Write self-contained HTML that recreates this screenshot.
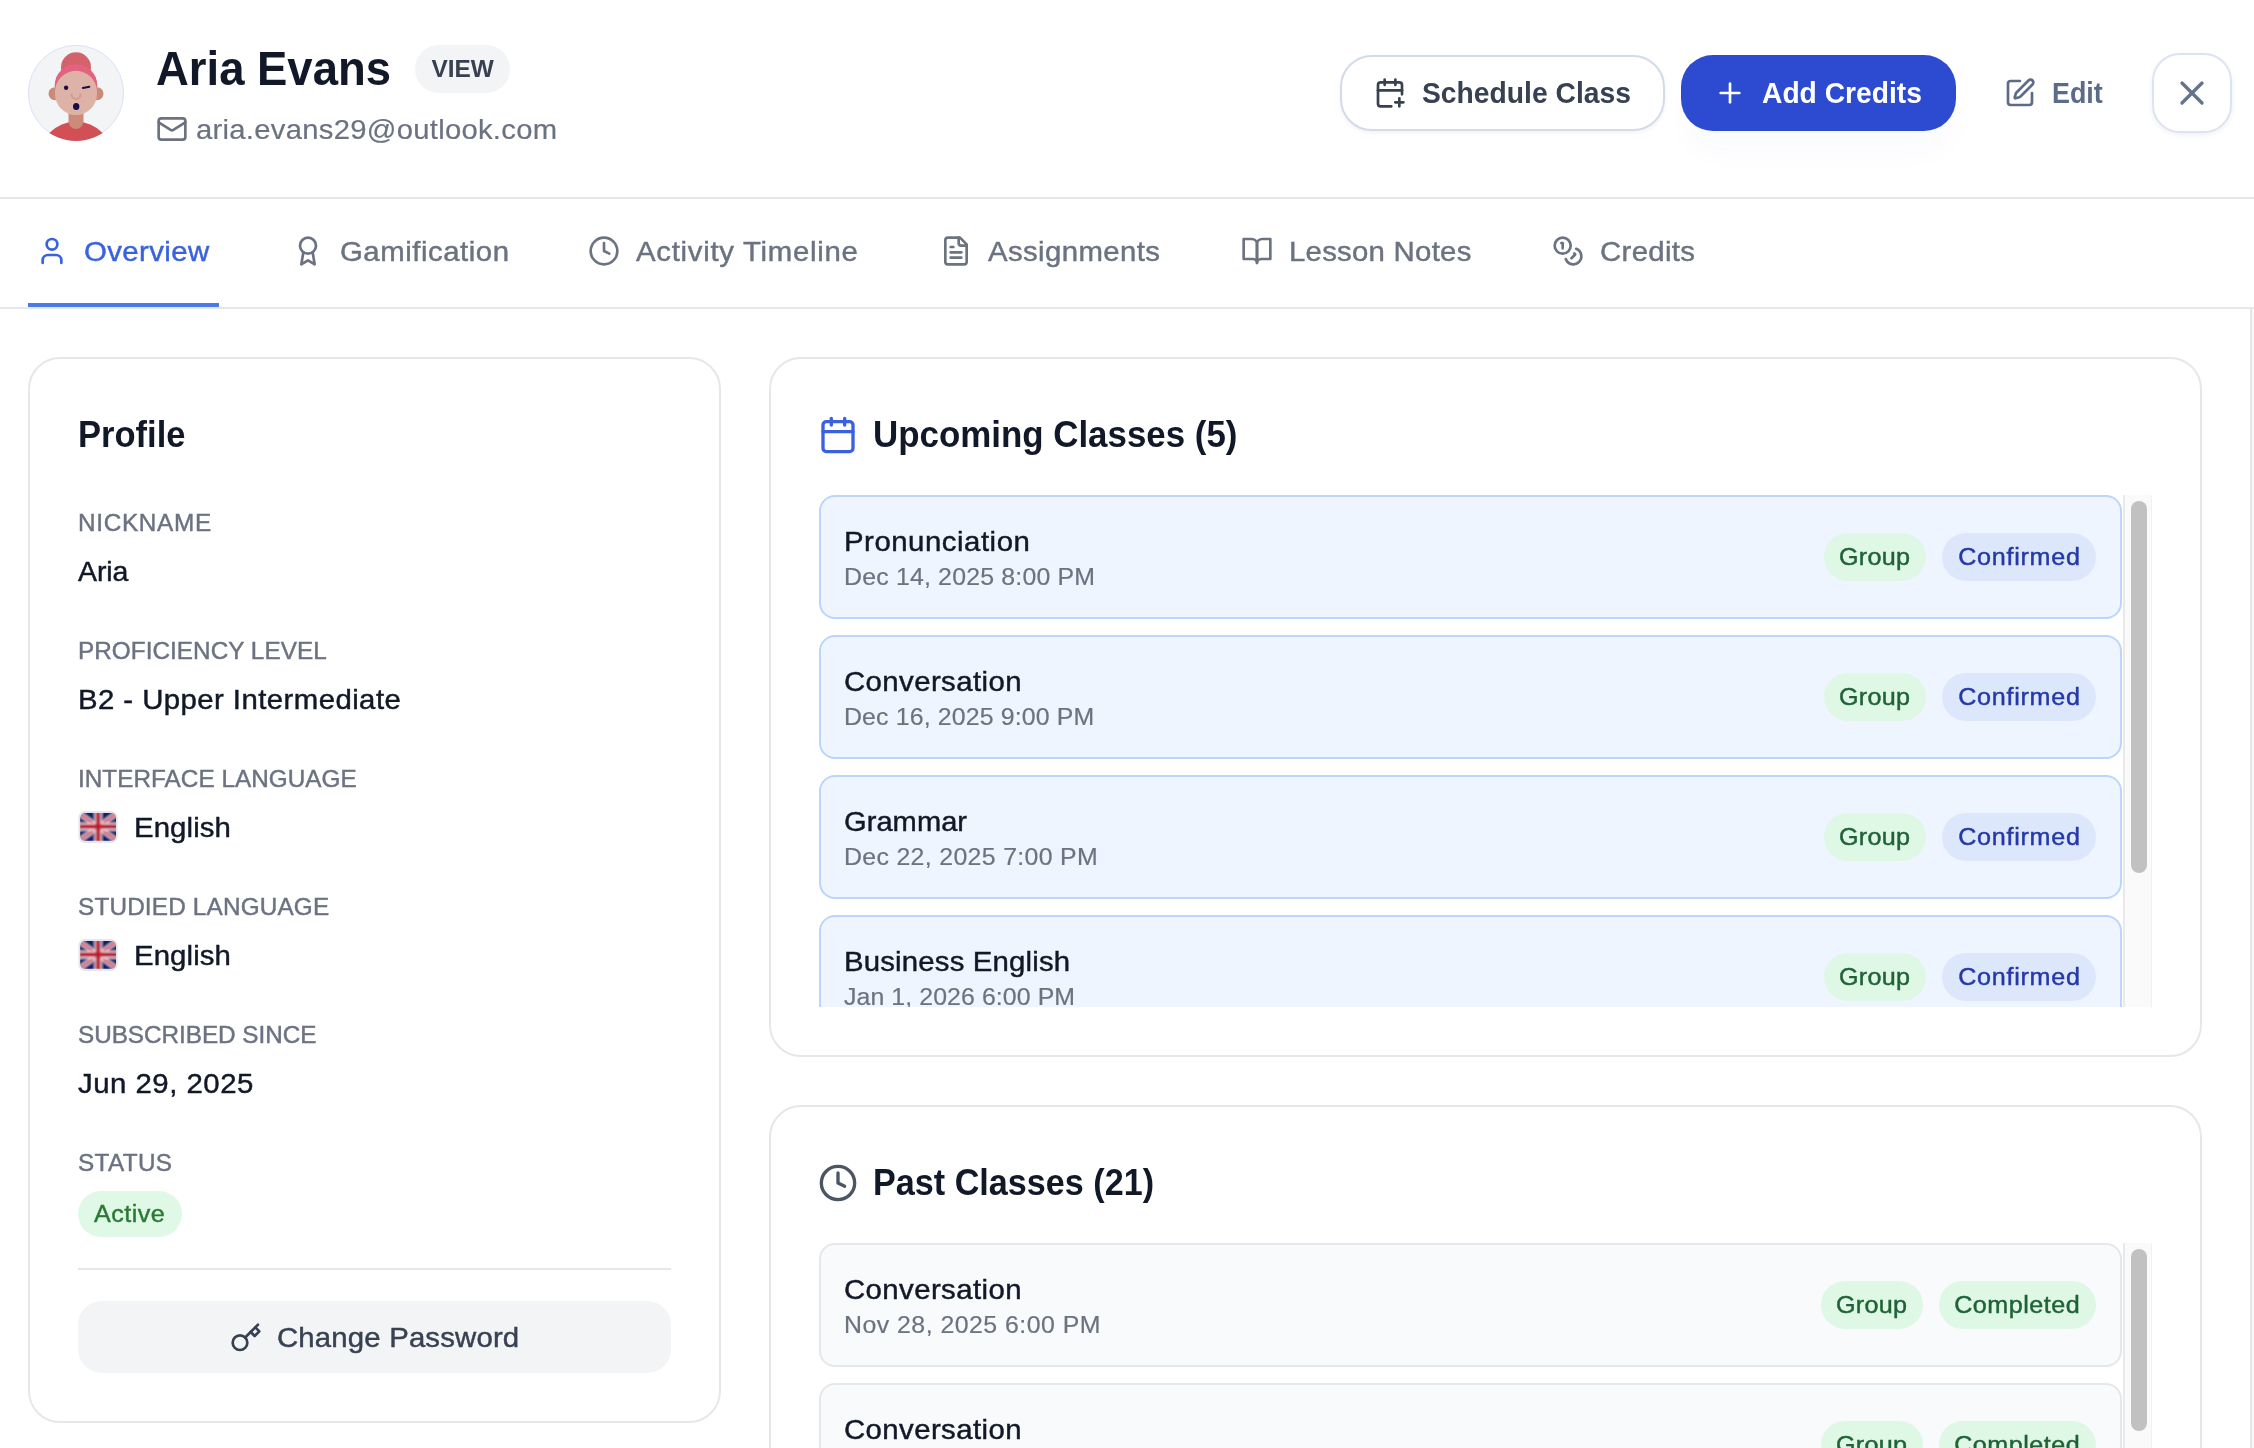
<!DOCTYPE html>
<html lang="en">
<head>
<meta charset="utf-8">
<title>Aria Evans – Student Profile</title>
<style>
*{box-sizing:border-box;margin:0;padding:0}
html,body{width:2254px;height:1448px;overflow:hidden;background:#fff}
body{font-family:"Liberation Sans",Arial,sans-serif;color:#111827;position:relative}
svg{display:block;flex:none}
button{font:inherit;border:0;background:none;cursor:pointer;text-align:left}
a{text-decoration:none}
ul{list-style:none}
.x{display:inline-block;white-space:nowrap;transform-origin:0 50%}
.m{-webkit-text-stroke:.45px currentColor}
.r{-webkit-text-stroke:.2px currentColor}
.ic{fill:none;stroke:currentColor;stroke-width:2;stroke-linecap:round;stroke-linejoin:round}
.header,.tabs,.card{will-change:transform}

/* ---------- header ---------- */
.header{position:absolute;left:0;top:0;width:2254px;height:199px;border-bottom:2px solid #e5e7eb;background:#fff}
.avatar{position:absolute;left:28px;top:45px;width:96px;height:96px}
.name{position:absolute;left:156px;top:40px;height:56px;line-height:56px;font-size:49px;font-weight:700;color:#111827;white-space:nowrap}
.view{position:absolute;left:415px;top:45px;width:95px;height:48px;border-radius:24px;background:#f3f4f6;color:#374151;font-size:24px;font-weight:700;line-height:48px;text-align:center;white-space:nowrap}
.view .x{transform-origin:50% 50%}
.email{position:absolute;left:156px;top:109px;height:40px;display:flex;align-items:center;color:#6b7280;font-size:28.5px;line-height:40px;white-space:nowrap}
.email svg{width:32px;height:32px;margin-right:8px}

.btn{position:absolute;display:flex;align-items:center;white-space:nowrap;font-size:28.8px;font-weight:700;line-height:40px}
.btn svg{width:32px;height:32px;margin-right:16px}
.btn-schedule{left:1340px;top:55px;width:325px;height:76px;border:2px solid #d3dbe9;border-radius:32px;background:#fff;color:#374151;padding-left:32px;box-shadow:0 2px 4px rgba(30,41,90,.06)}
.btn-add{left:1681px;top:55px;width:275px;height:76px;border-radius:32px;background:#2c4bd0;color:#fff;padding-left:33px;box-shadow:0 26px 34px -8px rgba(44,75,208,.028)}
.btn-edit{left:2004px;top:55px;height:76px;color:#5b6b88}
.btn-close{left:2152px;top:53px;width:80px;height:80px;border:2px solid #dde3f0;border-radius:28px;background:#fff;color:#64748b;justify-content:center;box-shadow:0 2px 5px rgba(30,41,90,.07)}
.btn-close svg{width:40px;height:40px;margin:0}

/* ---------- tabs ---------- */
.tabs{position:absolute;left:0;top:199px;width:2254px;height:110px;border-bottom:2px solid #e5e7eb;background:#fff}
.tab{position:absolute;top:0;height:108px;display:flex;align-items:center;padding:0 8px 4px 8px;color:#6b7280;font-size:28.5px;line-height:40px;white-space:nowrap}
.tab svg{width:32px;height:32px;margin-right:16px}
.tab.active{color:#3a62de;border-bottom:4px solid #4a7be8;padding-bottom:0}

/* ---------- content ---------- */
.main{position:absolute;left:0;top:309px;width:2252px;height:1139px;border-right:2px solid #e5e7eb;background:#fff}
.edge{position:absolute;left:2252px;top:309px;width:2px;height:1139px;background:#f7f7f8}
.card{position:absolute;border:2px solid #e5e7eb;border-radius:32px;background:#fff;padding:48px}
.profile{left:28px;top:357px;width:693px;height:1066px}
.upcoming{left:769px;top:357px;width:1433px;height:700px}
.past{left:769px;top:1105px;width:1433px;height:700px}
.card h3{font-size:36.5px;line-height:56px;height:56px;font-weight:700;color:#111827;white-space:nowrap;display:flex;align-items:center}
.card h3 svg{width:40px;height:40px;margin-left:-1px;margin-right:15px}

/* profile fields */
.fields{margin-top:48px}
.field{height:80px;margin-bottom:48px}
.field dt{height:24px;line-height:24px;font-size:24.3px;color:#6b7280;text-transform:uppercase;white-space:nowrap}
.field dd{height:40px;line-height:40px;margin-top:16px;font-size:28.5px;color:#111827;white-space:nowrap;display:flex;align-items:center}
.flag{width:40px;height:32px;margin-right:16px}
.pill{display:flex;align-items:center;justify-content:center;height:48px;line-height:48px;border-radius:24px;font-size:24.4px;white-space:nowrap}
.pill .x{transform-origin:50% 50%}
.pill.green{background:#def8e5;color:#1f6236}
.pill.blue{background:#dde7fb;color:#2438a8}
.pill.active{height:46px;line-height:46px;width:104px;margin-top:6px;color:#2a7a36;background:#dff9e6}
.divider{position:absolute;left:48px;top:909px;width:593px;height:2px;background:#e5e7eb}
.btn-pw{position:absolute;left:48px;top:942px;width:593px;height:72px;border-radius:24px;background:#f3f4f6;color:#374151;display:flex;align-items:center;padding-left:152px;font-size:28.5px;line-height:40px;white-space:nowrap}
.btn-pw svg{width:32px;height:32px;margin-right:15px;position:relative;top:.5px}

/* class lists */
.list{position:absolute;left:48px;top:136px;width:1333px;height:512px;overflow:hidden}
.item{position:relative;width:1303px;height:124px;margin-bottom:16px;border:2px solid #bcd5fb;border-radius:16px;background:#eff5fe}
.past .item{border-color:#e5e7eb;background:#f9fafb}
.item .t{position:absolute;left:23px;top:24px;height:40px;line-height:40px;font-size:28.5px;color:#111827;white-space:nowrap}
.item .d{position:absolute;left:23px;top:64px;height:32px;line-height:32px;font-size:24.4px;color:#6b7280;white-space:nowrap}
.item .pill{position:absolute;top:36px}
.sb{position:absolute;right:0;top:0;width:29px;height:512px;background:#fafafa;border-left:2px solid #e9e9e9;border-right:1px solid #f1f1f1}
.sb i{position:absolute;left:6px;width:16px;border-radius:8px;background:#c1c1c1}
</style>
</head>
<body>
<header class="header">
  <svg class="avatar" viewBox="0 0 96 96" aria-label="Avatar of Aria Evans">
    <defs><clipPath id="avc"><circle cx="48" cy="48" r="48"/></clipPath></defs>
    <circle cx="48" cy="48" r="47.600" fill="#f3f4f6" stroke="#d9d6fb" stroke-width=".800"/>
    <g clip-path="url(#avc)">
      <circle cx="48" cy="113.600" r="37" fill="#d24f55"/>
      <path d="M40.500 62h15v14.500a7.500 7.500 0 0 1-15 0z" fill="#cc8a78"/>
      <circle cx="27" cy="48.700" r="6.500" fill="#cc8a78"/>
      <circle cx="69" cy="48.700" r="6.500" fill="#cc8a78"/>
      <circle cx="48" cy="22.300" r="15" fill="#d3626a"/>
      <circle cx="48" cy="40.500" r="21.300" fill="#e2637f"/>
      <rect x="27" y="25.800" width="42" height="44.200" rx="21" ry="21" fill="#deb3a7"/>
      <circle cx="38.100" cy="42.700" r="2.200" fill="#1b0b47"/>
      <path d="M54.900 42.900l6.400-1.100" stroke="#1b0b47" stroke-width="2" stroke-linecap="round" fill="none"/>
      <path d="M43.600 49.400a4.500 4.500 0 0 0 9 0" stroke="#d39a8d" stroke-width="2" stroke-linecap="round" fill="none"/>
      <ellipse cx="48.200" cy="61.500" rx="3.200" ry="3.600" fill="#1b0b47"/>
    </g>
  </svg>
  <h1 class="name"><span class="x" style="transform:scaleX(0.9275)">Aria Evans</span></h1>
  <span class="view"><span class="x" style="transform:scaleX(1.0164)">VIEW</span></span>
  <div class="email">
    <svg class="ic" viewBox="0 0 24 24"><rect width="20" height="16" x="2" y="4" rx="2"/><path d="m22 7-8.970 5.700a1.940 1.940 0 0 1-2.060 0L2 7"/></svg>
    <span class="x r" style="letter-spacing:0.28px;transform:scaleX(1.025)">aria.evans29@outlook.com</span>
  </div>

  <button class="btn btn-schedule">
    <svg class="ic" viewBox="0 0 24 24"><path d="M8 2v4"/><path d="M16 2v4"/><path d="M21 13V6a2 2 0 0 0-2-2H5a2 2 0 0 0-2 2v14a2 2 0 0 0 2 2h8"/><path d="M3 10h18"/><path d="M16 19h6"/><path d="M19 16v6"/></svg>
    <span class="x" style="transform:scaleX(0.9815)">Schedule Class</span>
  </button>
  <button class="btn btn-add">
    <svg class="ic" viewBox="0 0 24 24"><path d="M5 12h14"/><path d="M12 5v14"/></svg>
    <span class="x" style="transform:scaleX(0.9801)">Add Credits</span>
  </button>
  <button class="btn btn-edit">
    <svg class="ic" viewBox="0 0 24 24"><path d="M12 3H5a2 2 0 0 0-2 2v14a2 2 0 0 0 2 2h14a2 2 0 0 0 2-2v-7"/><path d="M18.375 2.625a1 1 0 0 1 3 3l-9.013 9.014a2 2 0 0 1-.853.505l-2.873.840a.5.5 0 0 1-.620-.620l.840-2.873a2 2 0 0 1 .506-.852z"/></svg>
    <span class="x" style="transform:scaleX(0.934)">Edit</span>
  </button>
  <button class="btn btn-close" aria-label="Close">
    <svg class="ic" viewBox="0 0 24 24"><path d="M18 6 6 18"/><path d="m6 6 12 12"/></svg>
  </button>
</header>

<nav class="tabs">
  <a class="tab active" style="left:28px;width:191px">
    <svg class="ic" viewBox="0 0 24 24"><path d="M19 21v-2a4 4 0 0 0-4-4H9a4 4 0 0 0-4 4v2"/><circle cx="12" cy="7" r="4"/></svg>
    <span class="x m" style="letter-spacing:0.38px;transform:scaleX(1.03)">Overview</span>
  </a>
  <a class="tab" style="left:284px">
    <svg class="ic" viewBox="0 0 24 24"><circle cx="12" cy="8" r="6"/><path d="M15.477 12.890 17 22l-5-3-5 3 1.523-9.110"/></svg>
    <span class="x m" style="letter-spacing:0.52px;transform:scaleX(1.03)">Gamification</span>
  </a>
  <a class="tab" style="left:580px">
    <svg class="ic" viewBox="0 0 24 24"><circle cx="12" cy="12" r="10"/><path d="M12 6v6l4 2"/></svg>
    <span class="x m" style="letter-spacing:0.69px;transform:scaleX(1.03)">Activity Timeline</span>
  </a>
  <a class="tab" style="left:932px">
    <svg class="ic" viewBox="0 0 24 24"><path d="M15 2H6a2 2 0 0 0-2 2v16a2 2 0 0 0 2 2h12a2 2 0 0 0 2-2V7Z"/><path d="M14 2v4a2 2 0 0 0 2 2h4"/><path d="M10 9H8"/><path d="M16 13H8"/><path d="M16 17H8"/></svg>
    <span class="x m" style="letter-spacing:0.38px;transform:scaleX(1.03)">Assignments</span>
  </a>
  <a class="tab" style="left:1233px">
    <svg class="ic" viewBox="0 0 24 24"><path d="M2 3h6a4 4 0 0 1 4 4v14a3 3 0 0 0-3-3H2z"/><path d="M22 3h-6a4 4 0 0 0-4 4v14a3 3 0 0 1 3-3h7z"/></svg>
    <span class="x m" style="letter-spacing:0.25px;transform:scaleX(1.03)">Lesson Notes</span>
  </a>
  <a class="tab" style="left:1544px">
    <svg class="ic" viewBox="0 0 24 24"><circle cx="8" cy="8" r="6"/><path d="M18.090 10.370A6 6 0 1 1 10.340 18"/><path d="M7 6h1v4"/><path d="m16.710 13.880.700.710-2.820 2.820"/></svg>
    <span class="x m" style="letter-spacing:0.33px;transform:scaleX(1.03)">Credits</span>
  </a>
</nav>

<main class="main"></main>
<div class="edge"></div>

<section class="card profile">
  <h3><span class="x" style="transform:scaleX(0.9464)">Profile</span></h3>
  <dl class="fields">
    <div class="field"><dt><span class="x m" style="letter-spacing:0.7px">NICKNAME</span></dt><dd><span class="x m" style="letter-spacing:-0.1px">Aria</span></dd></div>
    <div class="field"><dt><span class="x m" style="letter-spacing:0.04px">PROFICIENCY LEVEL</span></dt><dd><span class="x m" style="letter-spacing:0.42px;transform:scaleX(1.03)">B2 - Upper Intermediate</span></dd></div>
    <div class="field"><dt><span class="x m" style="letter-spacing:0.03px">INTERFACE LANGUAGE</span></dt><dd><svg class="flag" viewBox="0 0 40 32" aria-label="English flag"><defs><clipPath id="fc1"><rect x="2.200" y="2.100" width="35.800" height="27.700" rx="4.500"/></clipPath><filter id="fb1" x="-10%" y="-10%" width="120%" height="120%"><feGaussianBlur stdDeviation=".800"/></filter></defs><rect x=".400" y=".100" width="39.300" height="31.800" rx="6.500" fill="#e3e7ee"/><g clip-path="url(#fc1)"><g filter="url(#fb1)"><rect x="-4" y="-4" width="48" height="40" fill="#0f1f6a"/><path d="M-2 0 42 32M42 0-2 32" stroke="#f8e9ed" stroke-width="4.800"/><path d="M-2 0 42 32M42 0-2 32" stroke="#cf3b56" stroke-width="2.400"/><path d="M20.100 -4v40M-4 15.700h48" stroke="#fbf0f3" stroke-width="7.400"/><path d="M20.100 -4v40M-4 15.700h48" stroke="#b81f33" stroke-width="4.800"/></g></g></svg><span class="x m" style="letter-spacing:0.1px;transform:scaleX(1.03)">English</span></dd></div>
    <div class="field"><dt><span class="x m" style="letter-spacing:0.18px">STUDIED LANGUAGE</span></dt><dd><svg class="flag" viewBox="0 0 40 32" aria-label="English flag"><defs><clipPath id="fc2"><rect x="2.200" y="2.100" width="35.800" height="27.700" rx="4.500"/></clipPath><filter id="fb2" x="-10%" y="-10%" width="120%" height="120%"><feGaussianBlur stdDeviation=".800"/></filter></defs><rect x=".400" y=".100" width="39.300" height="31.800" rx="6.500" fill="#e3e7ee"/><g clip-path="url(#fc2)"><g filter="url(#fb2)"><rect x="-4" y="-4" width="48" height="40" fill="#0f1f6a"/><path d="M-2 0 42 32M42 0-2 32" stroke="#f8e9ed" stroke-width="4.800"/><path d="M-2 0 42 32M42 0-2 32" stroke="#cf3b56" stroke-width="2.400"/><path d="M20.100 -4v40M-4 15.700h48" stroke="#fbf0f3" stroke-width="7.400"/><path d="M20.100 -4v40M-4 15.700h48" stroke="#b81f33" stroke-width="4.800"/></g></g></svg><span class="x m" style="letter-spacing:0.1px;transform:scaleX(1.03)">English</span></dd></div>
    <div class="field"><dt><span class="x m" style="letter-spacing:-0.04px">SUBSCRIBED SINCE</span></dt><dd><span class="x m" style="letter-spacing:0.49px;transform:scaleX(1.03)">Jun 29, 2025</span></dd></div>
    <div class="field"><dt><span class="x m" style="letter-spacing:0.36px">STATUS</span></dt><dd><span class="pill active"><span class="x m" style="letter-spacing:0.45px;transform:scaleX(1.03)">Active</span></span></dd></div>
  </dl>
  <div class="divider"></div>
  <button class="btn-pw">
    <svg class="ic" viewBox="0 0 24 24"><circle cx="7.500" cy="15.500" r="5.500"/><path d="m21 2-9.600 9.600"/><path d="m15.500 7.500 3 3L22 7l-3-3"/></svg>
    <span class="x m" style="letter-spacing:0.16px;transform:scaleX(1.03)">Change Password</span>
  </button>
</section>

<section class="card upcoming">
  <h3><svg class="ic" viewBox="0 0 24 24" style="color:#3a62de"><path d="M8 2v4"/><path d="M16 2v4"/><rect width="18" height="18" x="3" y="4" rx="2"/><path d="M3 10h18"/></svg><span class="x" style="transform:scaleX(0.9556)">Upcoming Classes (5)</span></h3>
  <div class="list">
    <ul>
      <li class="item">
        <div class="t"><span class="x m" style="letter-spacing:0.51px;transform:scaleX(1.03)">Pronunciation</span></div>
        <div class="d"><span class="x r" style="letter-spacing:0.18px;transform:scaleX(1.02)">Dec 14, 2025 8:00 PM</span></div>
        <span class="pill green" style="left:1003px;width:102px"><span class="x m" style="letter-spacing:0.3px;transform:scaleX(1.03)">Group</span></span>
        <span class="pill blue" style="left:1121px;width:154px"><span class="x m" style="letter-spacing:0.71px;transform:scaleX(1.03)">Confirmed</span></span>
      </li>
      <li class="item">
        <div class="t"><span class="x m" style="letter-spacing:0.4px;transform:scaleX(1.03)">Conversation</span></div>
        <div class="d"><span class="x r" style="letter-spacing:0.14px;transform:scaleX(1.02)">Dec 16, 2025 9:00 PM</span></div>
        <span class="pill green" style="left:1003px;width:102px"><span class="x m" style="letter-spacing:0.3px;transform:scaleX(1.03)">Group</span></span>
        <span class="pill blue" style="left:1121px;width:154px"><span class="x m" style="letter-spacing:0.71px;transform:scaleX(1.03)">Confirmed</span></span>
      </li>
      <li class="item">
        <div class="t"><span class="x m" style="letter-spacing:0.05px;transform:scaleX(1.02)">Grammar</span></div>
        <div class="d"><span class="x r" style="letter-spacing:0.32px;transform:scaleX(1.02)">Dec 22, 2025 7:00 PM</span></div>
        <span class="pill green" style="left:1003px;width:102px"><span class="x m" style="letter-spacing:0.3px;transform:scaleX(1.03)">Group</span></span>
        <span class="pill blue" style="left:1121px;width:154px"><span class="x m" style="letter-spacing:0.71px;transform:scaleX(1.03)">Confirmed</span></span>
      </li>
      <li class="item">
        <div class="t"><span class="x m" style="letter-spacing:0.17px;transform:scaleX(1.03)">Business English</span></div>
        <div class="d"><span class="x r" style="letter-spacing:0.08px;transform:scaleX(1.02)">Jan 1, 2026 6:00 PM</span></div>
        <span class="pill green" style="left:1003px;width:102px"><span class="x m" style="letter-spacing:0.3px;transform:scaleX(1.03)">Group</span></span>
        <span class="pill blue" style="left:1121px;width:154px"><span class="x m" style="letter-spacing:0.71px;transform:scaleX(1.03)">Confirmed</span></span>
      </li>
    </ul>
    <div class="sb"><i style="top:6px;height:372px"></i></div>
  </div>
</section>

<section class="card past">
  <h3><svg class="ic" viewBox="0 0 24 24" style="color:#4b5563"><circle cx="12" cy="12" r="10"/><path d="M12 6v6l4 2"/></svg><span class="x" style="transform:scaleX(0.936)">Past Classes (21)</span></h3>
  <div class="list">
    <ul>
      <li class="item">
        <div class="t"><span class="x m" style="letter-spacing:0.4px;transform:scaleX(1.03)">Conversation</span></div>
        <div class="d"><span class="x r" style="letter-spacing:0.46px;transform:scaleX(1.02)">Nov 28, 2025 6:00 PM</span></div>
        <span class="pill green" style="left:1000px;width:102px"><span class="x m" style="letter-spacing:0.3px;transform:scaleX(1.03)">Group</span></span>
        <span class="pill green" style="left:1118px;width:157px"><span class="x m" style="letter-spacing:0.49px;transform:scaleX(1.03)">Completed</span></span>
      </li>
      <li class="item">
        <div class="t"><span class="x m" style="letter-spacing:0.4px;transform:scaleX(1.03)">Conversation</span></div>
        <div class="d"><span class="x r" style="letter-spacing:0.46px;transform:scaleX(1.02)">Nov 26, 2025 6:00 PM</span></div>
        <span class="pill green" style="left:1000px;width:102px"><span class="x m" style="letter-spacing:0.3px;transform:scaleX(1.03)">Group</span></span>
        <span class="pill green" style="left:1118px;width:157px"><span class="x m" style="letter-spacing:0.49px;transform:scaleX(1.03)">Completed</span></span>
      </li>
    </ul>
    <div class="sb"><i style="top:6px;height:182px"></i></div>
  </div>
</section>
</body>
</html>
